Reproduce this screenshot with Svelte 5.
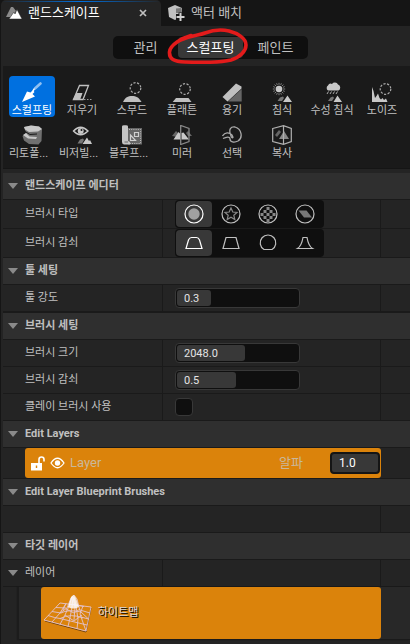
<script>
  const modes = ['관리', '스컬프팅', '페인트'];
  let mode = $state('스컬프팅');

  const tools = [
    { id: 'sculpt', label: '스컬프팅' },
    { id: 'erase', label: '지우기' },
    { id: 'smooth', label: '스무드' },
    { id: 'flatten', label: '플래튼' },
    { id: 'ramp', label: '융기' },
    { id: 'erosion', label: '침식' },
    { id: 'hydro', label: '수성 침식' },
    { id: 'noise', label: '노이즈' },
    { id: 'retopo', label: '리토폴...', cut: true },
    { id: 'visibility', label: '비저빌...', cut: true },
    { id: 'blueprint', label: '블루프...', cut: true },
    { id: 'mirror', label: '미러' },
    { id: 'select', label: '선택' },
    { id: 'copy', label: '복사' }
  ];
  let tool = $state('sculpt');

  const brushTypes = ['circle', 'alpha', 'pattern', 'component'];
  const falloffs = ['smooth', 'linear', 'spherical', 'tip'];
  let brushType = $state('circle');
  let falloff = $state('smooth');
</script>

{#snippet header(title)}
  <h2 class="section"><button class="fold"><i class="arrow"></i>{title}</button></h2>
{/snippet}

{#snippet slider(id, label, value, fill)}
  <div class="row">
    <label class="name" for={id}>{label}</label>
    <div class="value">
      <div class="number">
        <span class="track"><span class="fill" style="width: {fill}%"></span></span>
        <input {id} type="text" {value} />
      </div>
    </div>
    <div class="reset"></div>
  </div>
{/snippet}

{#snippet toolIcon(id)}
  <svg class="icon" viewBox="0 0 20 20" width="20" height="20" aria-hidden="true">
    {#if id === 'sculpt'}
      <path d="M0 20 5 9.5 8.5 10.5 11 8.5 12.5 10 10.5 12 13 14.5Z" fill="#fff" />
      <path d="M10 10.5 12.5 6.5 14 6.5" stroke="#fff" stroke-width="1.5" fill="none" />
      <path d="M13.5 6 18.5 1.5" stroke="#8fc0f2" stroke-width="2.6" stroke-linecap="round" />
    {:else if id === 'erase'}
      <path d="M7.5 3.5H16.5L11 17.5H1.5Z" fill="#1a1a1a" stroke="#c0c0c0" stroke-width="1.3" />
      <path d="M4.300 11H10.5L8 18H.7Z" fill="#c0c0c0" />
      <path d="M12 17.5H20" stroke="#999" stroke-dasharray="1.5 1.5" />
    {:else if id === 'smooth'}
      <circle cx="13.5" cy="6" r="5.3" class="dash" />
      <path d="M1 20C3 15.5 6 14 10 14S17 15.5 19.5 20Z" fill="#c0c0c0" />
    {:else if id === 'flatten'}
      <circle cx="13" cy="7" r="5.3" class="dash" />
      <path d="M4 16H16.5L19.5 20H.7Z" fill="#c0c0c0" />
    {:else if id === 'ramp'}
      <path d="M6 19.5 19.7 7V19.5Z" fill="#666" />
      <path d="M.5 15 14 1.5 19.5 4.5V6.5L5.5 19.5Z" fill="#c0c0c0" />
    {:else if id === 'erosion'}
      <path d="M7 .8V13.2M.8 7H13.2M2.6 2.6 11.4 11.4M11.4 2.6 2.6 11.4M4.6 1.3 9.4 12.7M9.4 1.3 4.6 12.7M1.3 4.6 12.7 9.4M1.3 9.4 12.7 4.6" stroke="#999" stroke-width=".8" />
      <circle cx="7" cy="7" r="4.3" fill="#1a1a1a" /><circle cx="7" cy="7" r="3.3" fill="#c8c8c8" />
      <path d="M5.5 19 8 15.5 11 14.5 12 16 10 19Z" fill="#777" />
      <path d="M11 20 15.5 13.5 17.5 16.5 20 20Z" fill="#c8c8c8" />
    {:else if id === 'hydro'}
      <path d="M6 8.5A3 3 0 0 1 6 3.5 3 3 0 0 1 10 2 3.5 3.5 0 0 1 16 2.5 3.3 3.3 0 0 1 16.5 8.5Z" fill="#c8c8c8" />
      <path d="M6.5 9.5 5 12M9.5 9.5 8 12M12.5 9.5 11 12M15.5 9.5 14 12" stroke="#aaa" />
      <path d="M6 19 8.5 15.5 11 14.5 12 16 10 19Z" fill="#777" />
      <path d="M11.5 20 15.5 13.5 17.5 16.5 20 20Z" fill="#c8c8c8" />
    {:else if id === 'noise'}
      <circle cx="13.5" cy="7" r="5.3" class="dash" />
      <path d="M0 20V5L1.5 9 3 16 4.5 14 6 11.5 7.5 16 9 17.5 10.5 16 12 18 14 16.5 15.5 20Z" fill="#c8c8c8" />
    {:else if id === 'retopo'}
      <path d="M2 2 9 .5 17 1.5 20 4 19.5 16 16.5 19.5 7 19 2 15.5 .5 11 4 8Z" fill="#707070" />
      <path d="M2 2 9 .5 17 1.5 20 4 16 6.5 7 7 3 4.5Z" fill="#c8c8c8" />
      <path d="M1 10 4 8 7.5 11.5 15 12 14 14 6 13.5Z" fill="#c8c8c8" />
      <path d="M3 6.5 8 9.5 15 9" stroke="#1a1a1a" fill="none" />
    {:else if id === 'visibility'}
      <path d="M1.5 6Q8.5-1.5 16 6Q8.5 13.5 1.5 6Z" fill="none" stroke="#c8c8c8" stroke-width="1.4" />
      <circle cx="8.7" cy="6" r="3" fill="#c8c8c8" /><circle cx="9.5" cy="5" r="1" fill="#1a1a1a" />
      <path d="M5.5 18.5 8 14.5 11 13.5 12 15 10 18.5Z" fill="#777" />
      <path d="M10.5 19 15 12.5 17 16 18 15 20 19Z" fill="#c8c8c8" />
    {:else if id === 'blueprint'}
      <path d="M6 3H20V19.5H6Z" fill="#666" />
      <path d="M7 4.5H18.5V18.5H7" stroke="#bbb" stroke-dasharray="1 1.2" fill="none" />
      <path d="M12.5 7.5H16.5V11.5H12.5ZM8.5 10V15.5H13.5Z" fill="none" stroke="#d0d0d0" stroke-width="1.2" />
      <path d="M0 1.5Q0 .3 2 .3H4Q6 .3 6 1.5V16Q9 16.5 8 19.5H2Q0 19 0 17Z" fill="#c4c4c4" />
      <path d="M2.5 17H6" stroke="#666" />
    {:else if id === 'mirror'}
      <path d="M0 11 4 6 8 10 6 12ZM14 8 16 6 20 11H16Z" fill="#666" />
      <path d="M1.5 14.5 6.5 7 8.5 9V14.5ZM9.5 8 11.5 7.5 17 14.5H9.5Z" fill="#c8c8c8" />
      <path d="M8.7.5V19.5L17 16.5V3.5Z" fill="none" stroke="#888" stroke-width="1.3" />
    {:else if id === 'select'}
      <path d="M.5 11C3 7 7 7 10 10C12 13 10 14 9 11C6 4 9 1.5 13 2C20 4 21 13 16 16C12 18 8 17 8 14C8 11 4 12 1 13.5" fill="none" stroke="#aaa" stroke-width="1.3" />
    {:else if id === 'copy'}
      <path d="M3 10 7 5 9 7 5 12Z" fill="#666" />
      <path d="M7 14 12 6 17 14Z" fill="#888" />
      <path d="M.7 3.5 11.5.7 19.3 3.5V16.5L11.5 19.3.7 16.5ZM11.5.7V19.3" fill="none" stroke="#b0b0b0" stroke-width="1.2" />
    {/if}
  </svg>
{/snippet}

{#snippet brushIcon(id)}
  <svg viewBox="0 0 20 20" width="20" height="20" aria-hidden="true">
    <circle cx="10" cy="10" r="9" fill="none" stroke="currentColor" stroke-width="1.2" />
    {#if id === 'circle'}
      <circle cx="10" cy="10" r="5.7" fill="#a0a0a0" />
    {:else if id === 'alpha'}
      <path d="M10 4 11.8 8 16 8.4 12.8 11.2 13.8 15.5 10 13.2 6.2 15.5 7.2 11.2 4 8.4 8.2 8Z" fill="none" stroke="#888" stroke-width="1.2" />
    {:else if id === 'pattern'}
      <path d="M8.5 3H11.5V6H8.5ZM5.5 6H8.5V9H5.5ZM11.5 6H14.5V9H11.5ZM2.5 9H5.5V12H2.5ZM8.5 9H11.5V12H8.5ZM14.5 9H17.5V12H14.5ZM5.5 12H8.5V15H5.5ZM11.5 12H14.5V15H11.5ZM8.5 15H11.5V18H8.5Z" fill="#888" />
    {:else}
      <path d="M3.5 6.5H11.5L17 13.5H9Z" fill="#777" />
    {/if}
  </svg>
{/snippet}

{#snippet falloffIcon(id)}
  <svg viewBox="0 0 20 20" width="20" height="20" fill="none" stroke="currentColor" stroke-width="1.2" aria-hidden="true">
    {#if id === 'smooth'}
      <path d="M2 15.5H18L15.5 7Q14.5 4.5 12.5 4.5H7.5Q5.5 4.5 4.5 7Z" />
    {:else if id === 'linear'}
      <path d="M2 15.5H18L15 4.5H5Z" />
    {:else if id === 'spherical'}
      <path d="M6 16.5H14A7.8 7.8 0 1 0 6 16.5Z" />
    {:else}
      <path d="M2.5 15.5H17.5Q13.5 13 12 4.5H8Q6.5 13 2.5 15.5Z" />
    {/if}
  </svg>
{/snippet}

<main>
  <nav class="tabs">
    <div class="tab active">
      <svg viewBox="0 0 16 14" width="16" height="14" aria-hidden="true">
        <path d="M0 11 5 1 7 1 10 5 6 11Z" fill="#8a8a8a" />
        <path d="M3 13 8 6 9 8 11 3.5 16 13Z" fill="#fff" stroke="#242424" stroke-width=".5" />
      </svg>
      <span class="title">랜드스케이프</span>
      <button class="close" aria-label="닫기">
        <svg viewBox="0 0 8 8" width="8" height="8"><path d="M1 1 7 7M7 1 1 7" stroke="#c0c0c0" stroke-width="1.7" /></svg>
      </button>
    </div>
    <div class="tab">
      <svg viewBox="0 0 17 17" width="17" height="17" aria-hidden="true">
        <path d="M0 3 7 0 14 3 13.5 9H8V14.5L7 15 1 12Z" fill="#c0c0c0" />
        <path d="M8 3.5 13.5 3V8H8Z" fill="#777" />
        <path d="M12.5 7.5V16.5M8 12H17" stroke="#151515" stroke-width="4" />
        <path d="M12.5 8V16M8.5 12H16.5" stroke="#d0d0d0" stroke-width="2" />
      </svg>
      <span class="title">액터 배치</span>
    </div>
  </nav>

  <div class="panel">
    <div class="modebar">
      <div class="modes">
        {#each modes as m}
          <button class:on={mode === m} onclick={() => (mode = m)}>{m}</button>
        {/each}
        <svg class="mark" viewBox="0 0 82 36" width="82" height="36" aria-hidden="true">
          <path d="M24 7.5C15 10 3 17 2.5 24C2 31 7 33.5 18 34C32 34.500 52 35 64 32C73 29.5 79 23 79 17C79 10 70 5 62 3C53 1 46 2 38 5C31 8 25 6.5 14 12" fill="none" stroke="#e31b1b" stroke-width="3.6" stroke-linecap="round" />
        </svg>
      </div>
    </div>

    <div class="tools">
      {#each tools as t}
        <button class="tool" class:on={tool === t.id} onclick={() => (tool = t.id)}>
          {@render toolIcon(t.id)}
          <span class:cut={t.cut}>{t.label}</span>
        </button>
      {/each}
    </div>

    {@render header('랜드스케이프 에디터')}
    <div class="row tall">
      <span class="name">브러시 타입</span>
      <div class="value">
        <div class="segments" role="group" aria-label="브러시 타입">
          {#each brushTypes as b}
            <button class:on={brushType === b} aria-label={b} onclick={() => (brushType = b)}>{@render brushIcon(b)}</button>
          {/each}
        </div>
      </div>
      <div class="reset"></div>
    </div>
    <div class="row tall">
      <span class="name">브러시 감쇠</span>
      <div class="value">
        <div class="segments" role="group" aria-label="브러시 감쇠">
          {#each falloffs as f}
            <button class:on={falloff === f} aria-label={f} onclick={() => (falloff = f)}>{@render falloffIcon(f)}</button>
          {/each}
        </div>
      </div>
      <div class="reset"></div>
    </div>

    {@render header('툴 세팅')}
    {@render slider('strength', '툴 강도', '0.3', 28)}
    <div class="divider"></div>

    {@render header('브러시 세팅')}
    {@render slider('size', '브러시 크기', '2048.0', 56)}
    {@render slider('falloff', '브러시 감쇠', '0.5', 49)}
    <div class="row">
      <label class="name" for="clay">클레이 브러시 사용</label>
      <div class="value"><input id="clay" type="checkbox" /></div>
      <div class="reset"></div>
    </div>

    {@render header('Edit Layers')}
    <div class="layer-row">
      <div class="layer">
        <svg viewBox="0 0 14 15" width="14" height="15" aria-hidden="true">
          <path d="M0 7H11V14.5H0Z" fill="#fff" />
          <path d="M8 7V3.5Q8 1 10.5 1T13 3.5V5.5" fill="none" stroke="#fff" stroke-width="1.6" />
          <path d="M5.5 9.5V12" stroke="#db830b" stroke-width="1.4" />
        </svg>
        <svg viewBox="0 0 15 12" width="15" height="12" aria-hidden="true">
          <path d="M1 6Q7.5-3.5 14 6Q7.5 15.5 1 6Z" fill="none" stroke="#fff" stroke-width="1.3" />
          <circle cx="7.5" cy="6" r="2.7" fill="#fff" />
        </svg>
        <span class="layer-name">Layer</span>
        <label for="alpha">알파</label>
        <input id="alpha" type="text" value="1.0" />
      </div>
    </div>

    {@render header('Edit Layer Blueprint Brushes')}
    <div class="row blank">
      <div class="span"></div>
      <div class="reset"></div>
    </div>

    {@render header('타깃 레이어')}
    <div class="row">
      <button class="name fold"><i class="arrow"></i>레이어</button>
      <div class="value"></div>
      <div class="reset"></div>
    </div>
    <div class="target-row">
      <div class="target">
        <svg viewBox="0 0 49 39" width="49" height="39" fill="none" aria-hidden="true">
          <path d="M2 27 43 38 48 14" stroke="#6d4210" />
          <g stroke="#e3c3cf" stroke-width=".9">
            <path d="M1 26 17 9 48 13 43 37ZM5 21.5Q12 24 17 24.500L44 31M9 17.500 18 19M38 23 45.500 25M13 13.5 23 14M37 16 47 19" />
            <path d="M9 28 17 19 23 9.500M17 30.5 22 21M25 32.5 27 24M34 35 35 25M23 9.500 20 16M40 12 37 20 43 37M30 10.5 41 12.5" />
            <path d="M17 19 24 14 28 4 31 1 34 5 37 17 45.500 25M22 21 26 12 29 3M27 24 29 13 30 3 32 13 31 26M35 25 33 12 31 3M18 19Q25 15 38 18M17 24.500Q28 19 40 24M22 21 31 27 39 21M23 15 31 19 37 15" />
          </g>
          <path d="M25 13 28 3Q31-1 33 4L36 13Q30 16 25 13Z" fill="#fff" opacity=".8" />
        </svg>
        <span>하이트맵</span>
      </div>
    </div>
    <div class="rest"></div>
  </div>
</main>

<style>
  :global(body) {
    margin: 0;
    background: #242424;
  }
  main {
    min-height: 100vh;
    display: flex;
    flex-direction: column;
    overflow: hidden;
    background: #242424;
    color: #c0c0c0;
    font: 11px/16px Roboto, 'Noto Sans CJK KR', sans-serif;
  }
  button,
  input {
    margin: 0;
    padding: 0;
    border: 0;
    background: none;
    color: inherit;
    font: inherit;
  }
  svg {
    display: block;
    flex: none;
  }

  .tabs {
    display: flex;
    height: 26px;
    background: #151515;
    font-size: 13px;
  }
  .tab {
    display: flex;
    align-items: center;
    gap: 6px;
    padding-left: 7px;
  }
  .tab.active {
    width: 155px;
    margin-left: 1px;
    padding-left: 5px;
    border-radius: 5px 5px 0 0;
    background: linear-gradient(90deg, #242424, #0070e0 50%, #242424) 0 1px / 100% 1px no-repeat, #242424;
    color: #fff;
  }
  .tab.active .title {
    flex: 1;
  }
  .close {
    padding: 4px 14px 4px 4px;
  }

  .panel {
    flex: 1;
    display: flex;
    flex-direction: column;
    border-left: 1px solid #151515;
    padding-left: 2px;
  }
  .modebar {
    display: flex;
    justify-content: center;
    padding: 10px 0 7px 8px;
  }
  .modes {
    position: relative;
    display: flex;
    border-radius: 5px;
    background: #0f0f0f;
    font-size: 13px;
  }
  .modes button {
    width: 65px;
    height: 21px;
    margin: 1px 0;
    border-radius: 4px;
  }
  .modes button.on {
    background: #383838;
    color: #fff;
  }
  .mark {
    position: absolute;
    left: 54px;
    top: -8px;
    pointer-events: none;
  }

  .tools {
    display: grid;
    grid-template-columns: repeat(auto-fill, 50px);
    grid-auto-rows: 43px;
    padding: 10px 3px 6px 4px;
    margin-bottom: 4px;
    border-bottom: 1px solid #151515;
    background: #1a1a1a;
  }
  .tool {
    display: flex;
    flex-direction: column;
    align-items: center;
    gap: 1px;
    width: 46px;
    height: 41px;
    margin-left: 2px;
    padding-top: 6px;
    border-radius: 4px;
    white-space: nowrap;
  }
  .tool.on {
    background: #0070e0;
    color: #fff;
  }
  .cut {
    align-self: flex-start;
  }
  .dash {
    fill: none;
    stroke: #aaa;
    stroke-width: 1.2;
    stroke-dasharray: 2.2 1.5;
  }

  .section {
    margin: 0;
    height: 26px;
    border-bottom: 1px solid #1a1a1a;
    background: #2f2f2f;
    font: inherit;
    font-weight: 700;
  }
  .fold {
    display: flex;
    align-items: center;
    gap: 7px;
    width: 100%;
    height: 100%;
    padding-left: 5px;
    text-align: left;
  }
  .arrow {
    border: 5px solid transparent;
    border-top: 6px solid #8a8a8a;
    border-bottom: 0;
  }
  .row {
    display: grid;
    grid-template-columns: 160px 1fr 29px;
    height: 26px;
    border-bottom: 1px solid #1a1a1a;
  }
  .row.tall {
    height: 28px;
  }
  .name {
    display: flex;
    align-items: center;
    box-sizing: border-box;
    padding-left: 22px;
    border-right: 1px solid #1a1a1a;
  }
  .name.fold {
    padding-left: 5px;
  }
  .value {
    display: flex;
    align-items: center;
    padding-left: 12px;
    border-right: 1px solid #1a1a1a;
  }
  .span {
    grid-column: 1 / 3;
    border-right: 1px solid #1a1a1a;
  }
  .divider {
    height: 1px;
    background: #1a1a1a;
  }

  .segments {
    display: flex;
    gap: 1px;
    padding: 1px;
    border-radius: 4px;
    background: #0f0f0f;
  }
  .segments button {
    display: flex;
    align-items: center;
    justify-content: center;
    width: 36px;
    height: 26px;
    border-radius: 4px;
  }
  .segments .on {
    background: #383838;
    color: #fff;
  }

  .number {
    position: relative;
    box-sizing: border-box;
    width: 125px;
    height: 20px;
    border: 1px solid #383838;
    border-radius: 4px;
    background: #0f0f0f;
  }
  .track {
    position: absolute;
    inset: 1px;
  }
  .fill {
    display: block;
    height: 100%;
    border-radius: 3px;
    background: #383838;
  }
  .number input {
    position: relative;
    display: block;
    box-sizing: border-box;
    width: 100%;
    height: 18px;
    padding-left: 8px;
    color: #e4e4e4;
  }
  input[type='checkbox'] {
    appearance: none;
    box-sizing: border-box;
    width: 18px;
    height: 18px;
    border: 1px solid #383838;
    border-radius: 4px;
    background: #0f0f0f;
  }

  .layer-row {
    padding: 0 29px 0 22px;
    border-bottom: 1px solid #1a1a1a;
  }
  .layer {
    display: flex;
    align-items: center;
    height: 30px;
    gap: 5px;
    padding-left: 6px;
    border-radius: 3px;
    background: #db830b;
    color: #c9b79a;
    font-size: 13px;
  }
  .layer-name {
    flex: 1;
  }
  .layer label {
    margin-right: 22px;
  }
  .layer input {
    box-sizing: border-box;
    width: 50px;
    height: 22px;
    padding-left: 7px;
    margin-right: 1px;
    border: 2px solid #151515;
    border-radius: 4px;
    background: #383838;
    color: #fff;
    font-size: 12px;
  }
  .target-row {
    padding: 0 29px 0 22px;
    margin-left: 16px;
    border-bottom: 1px solid #1a1a1a;
    box-shadow: -2px 0 1px #1c1c1c;
    background: #282828;
  }
  .target {
    display: flex;
    align-items: center;
    height: 52px;
    gap: 6px;
    padding-left: 2px;
    border-radius: 3px;
    background: #db830b;
    color: #d8d8d8;
    text-shadow: 1px 1px 0 #000;
  }
  .rest {
    flex: 1;
  }
</style>
